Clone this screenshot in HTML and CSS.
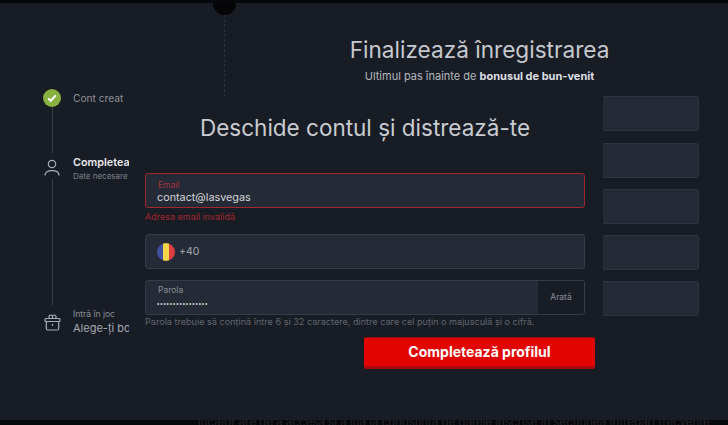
FILE: index.html
```html
<!DOCTYPE html>
<html lang="ro">
<head>
  <meta charset="UTF-8">
  <meta name="viewport" content="width=device-width, initial-scale=1.0">
  <title>Finalizează înregistrarea</title>
  <link rel="stylesheet" href="styles.css">
</head>
<body>
  <div class="card">
    <!-- Pasi -->
    <aside class="steps">
      <div class="step step-done">
        <span class="step-icon check">
          <svg width="12" height="12" viewBox="0 0 12 12"><path d="M2.2 6.400 4.800 8.800 9.800 3.400" fill="none" stroke="#fff" stroke-width="2"/></svg>
        </span>
        <div class="step-text"><div class="step-name">Cont creat</div></div>
      </div>
      <div class="step-line line-one"></div>
      <div class="step step-current">
        <span class="step-icon">
          <svg width="16" height="18" viewBox="0 0 16 18" fill="none" stroke="#a9adb5" stroke-width="1.2">
            <circle cx="8" cy="5" r="3.700"/>
            <path d="M1 16.500C1 13.200 4 11.700 8 11.700S15 13.200 15 16.500"/>
          </svg>
        </span>
        <div class="step-text">
          <div class="step-title">Completează profilul</div>
          <div class="step-sub">Date necesare</div>
        </div>
      </div>
      <div class="step-line line-two"></div>
      <div class="step step-last">
        <span class="step-icon">
          <svg width="17" height="17" viewBox="0 0 17 17" fill="none" stroke="#a9adb5" stroke-width="1.2">
            <rect x="1" y="4.500" width="15" height="3" rx="1"/>
            <path d="M2.300 7.500V14.500C2.300 15.400 2.900 16 3.800 16H13.200C14.100 16 14.700 15.400 14.700 14.500V7.500"/>
            <path d="M5 4.500V2.600C5 1.600 6 1 7 1S8.500 1.600 8.500 2.600V4.500M8.500 2.600C8.500 1.600 9 1 10 1S12 1.600 12 2.600V4.500"/>
            <path d="M8.500 9.800V12"/>
          </svg>
        </span>
        <div class="step-text">
          <div class="step-small">Intră în joc</div>
          <div class="step-bonus">Alege-ți bonusul</div>
        </div>
      </div>
    </aside>

    <div class="divider"></div>

    <!-- Formular in spate -->
    <main class="back-form">
      <h1>Finalizează înregistrarea</h1>
      <p class="lead">Ultimul pas înainte de <b>bonusul de bun-venit</b></p>
      <div class="back-fields">
        <div class="back-field"></div>
        <div class="back-field"></div>
        <div class="back-field"></div>
        <div class="back-field"></div>
        <div class="back-field"></div>
      </div>
    </main>

    <span class="notch notch-top"></span>
    <span class="notch notch-bottom"><span class="notch-text">jucător</span></span>
  </div>
  <div class="bottom-band">jucător are de a accesa și a lua la cunoștință de datele înscrise în secțiunea Întrebări frecvente</div>

  <!-- Fereastra -->
  <section class="modal">
    <h2>Deschide contul și distrează-te</h2>
    <div class="field field-error">
      <label>Email</label>
      <div class="value">contact@lasvegas</div>
    </div>
    <div class="error-text">Adresa email invalidă</div>
    <div class="field field-phone">
      <span class="flag"><i class="blue"></i><i class="yellow"></i><i class="red"></i></span>
      <span class="prefix">+40</span>
    </div>
    <div class="field field-pass">
      <div class="pass-main">
        <label>Parola</label>
        <div class="dots">••••••••••••••••</div>
      </div>
      <div class="show">Arată</div>
    </div>
    <div class="hint">Parola trebuie să conțină între 6 și 32 caractere, dintre care cel puțin o majusculă și o cifră.</div>
    <div class="actions"><button class="submit">Completează profilul</button></div>
  </section>
</body>
</html>
```

FILE: styles.css
```css
/* Baza */
body {
  margin: 0;
  width: 728px;
  height: 425px;
  position: relative;
  overflow: hidden;
  background-color: #07080b;
  font-family: Inter, "Liberation Sans", sans-serif;
  color: #c9ccd1;
}
.card {
  position: relative;
  margin-top: 3px;
  height: 417px;
  display: flex;
  background-color: #181c25;
  overflow: hidden;
}
.bottom-band {
  height: 5px;
  padding-left: 198px;
  overflow: hidden;
  font-size: 11.500px;
  line-height: 5px;
  white-space: nowrap;
  color: #24272d;
}

/* Pasi */
.steps {
  width: 224px;
  padding: 86px 0 0 43px;
  box-sizing: border-box;
}
.step {
  display: flex;
  gap: 12px;
  width: 86px;
  overflow: hidden;
}
.step-icon {
  width: 18px;
  flex: none;
  display: flex;
  align-items: center;
  justify-content: center;
}
.step-icon.check {
  height: 18px;
  border-radius: 50%;
  background-color: #8ab13f;
}
.step-text {
  white-space: nowrap;
}
.step-name {
  font-size: 10.200px;
  line-height: 18px;
  color: #8d9096;
}
.step-line {
  width: 1px;
  margin-left: 9px;
  background-color: #3a3f49;
}
.line-one {
  height: 46px;
}
.line-two {
  height: 126px;
}
.step-current {
  height: 23px;
  margin-top: 3px;
}
.step-title {
  font-size: 10.800px;
  line-height: 13px;
  font-weight: 600;
  color: #e8e9ec;
}
.step-sub {
  font-size: 8px;
  line-height: 14px;
  color: #7f838a;
}
.step-last {
  margin-top: 3px;
  height: 28px;
}
.step-small {
  font-size: 8.500px;
  line-height: 13px;
  color: #8d9096;
}
.step-bonus {
  font-size: 11px;
  line-height: 15px;
  color: #a6a9af;
}

/* Linia punctata din mijloc */
.divider {
  width: 0;
  height: 398px;
  border-left: 1px dashed #2c3039;
  margin-top: 11px;
}

/* Formular in spate */
.back-form {
  width: 439px;
  margin-left: 35px;
  text-align: center;
}
.back-form h1 {
  margin: 33px 0 0;
  font-size: 22.600px;
  line-height: 28px;
  font-weight: 400;
  color: #c6c9ce;
}
.lead {
  margin: 5px 0 0;
  font-size: 11px;
  line-height: 14px;
  color: #b6b9bf;
}
.lead b {
  color: #dddfe3;
}
.back-fields {
  margin-top: 13px;
  display: flex;
  flex-direction: column;
  gap: 11px;
}
.back-field {
  height: 33px;
  background-color: #242a36;
  border: 1px solid #2f343f;
  border-radius: 3px;
}
.back-field:first-child {
  margin-bottom: 1px;
}

/* Cercuri sus si jos */
.notch {
  position: absolute;
  left: 213px;
  width: 23px;
  height: 23px;
  border-radius: 50%;
  background-color: #050507;
}
.notch-top {
  top: -11px;
}
.notch-bottom {
  bottom: -11px;
}
.notch-text {
  position: absolute;
  left: -15px;
  top: 3px;
  font-size: 11.500px;
  color: #2a2d33;
}

/* Fereastra */
.modal {
  position: absolute;
  left: 130px;
  top: 96px;
  width: 473px;
  height: 324px;
  box-sizing: border-box;
  padding: 0 18px 0 15px;
  background-color: #181c25;
}
.modal h2 {
  margin: 17px 0 0;
  font-size: 22.500px;
  line-height: 30px;
  font-weight: 400;
  text-align: center;
  color: #c9ccd1;
}
.field {
  width: 440px;
  height: 35px;
  box-sizing: border-box;
  background-color: #242a36;
  border: 1px solid #363b46;
  border-radius: 3px;
}
.field-error {
  margin-top: 30px;
  padding: 6px 11px 0 12px;
  border-color: #a3262e;
}
.field-error label {
  display: block;
  font-size: 8.500px;
  line-height: 10px;
  color: #a8343b;
}
.value {
  margin-left: -1px;
  font-size: 10.800px;
  line-height: 15px;
  color: #d5d7db;
}
.error-text {
  margin-top: 3px;
  font-size: 9px;
  line-height: 11px;
  color: #a3262e;
}
.field-phone {
  margin-top: 12px;
  padding-left: 11px;
  display: flex;
  align-items: center;
  gap: 4px;
}
.flag {
  width: 18px;
  height: 18px;
  border-radius: 50%;
  overflow: hidden;
  display: flex;
}
.flag i {
  flex: 1;
}
.flag .blue {
  background-color: #3f4f9f;
}
.flag .yellow {
  background-color: #f5d548;
}
.flag .red {
  background-color: #dc3d40;
}
.prefix {
  font-size: 10.500px;
  color: #a6a9af;
}
.field-pass {
  margin-top: 11px;
  display: flex;
}
.pass-main {
  flex: 1;
  padding: 4px 11px 0;
}
.pass-main label {
  display: block;
  margin-left: 1px;
  font-size: 8.500px;
  line-height: 11px;
  color: #8d9096;
}
.dots {
  margin-top: 2px;
  font-family: "Liberation Sans", sans-serif;
  font-size: 6.300px;
  letter-spacing: 1px;
  line-height: 12px;
  color: #d5d7db;
}
.show {
  width: 46px;
  background-color: #181c25;
  border-radius: 0 3px 3px 0;
  font-size: 8.500px;
  line-height: 33px;
  text-align: center;
  color: #8d9096;
}
.hint {
  margin-top: 1px;
  font-size: 9.100px;
  line-height: 12px;
  color: #62666e;
  white-space: nowrap;
}
.actions {
  margin: 9px -10px 0 0;
  display: flex;
  justify-content: flex-end;
}
.submit {
  width: 231px;
  height: 32px;
  padding: 0 0 2px;
  border: none;
  border-top: 1px solid #8e0f14;
  border-bottom: 3px solid #a80a10;
  border-radius: 2px;
  background-color: #e20400;
  font-family: inherit;
  font-size: 14px;
  font-weight: 700;
  color: #ffffff;
}
```
